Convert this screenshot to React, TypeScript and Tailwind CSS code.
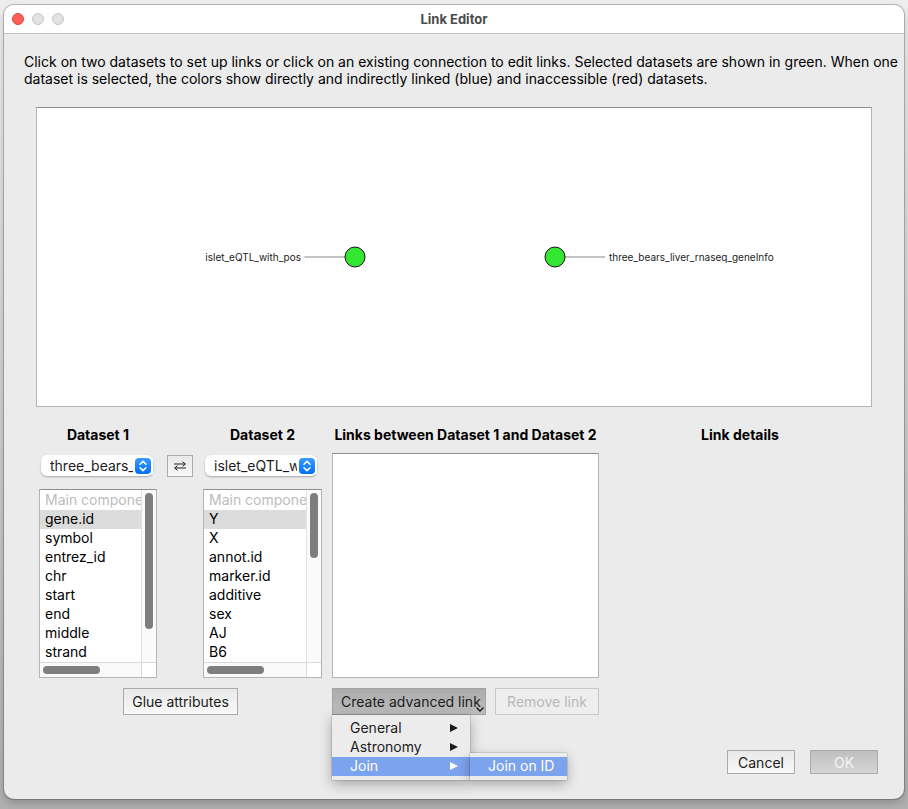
import { useState } from "react";

const datasetOneAttributes = ["gene.id", "symbol", "entrez_id", "chr", "start", "end", "middle", "strand"];
const datasetTwoAttributes = ["Y", "X", "annot.id", "marker.id", "additive", "sex", "AJ", "B6"];

const raisedButton =
  "border border-[#ababab] bg-linear-to-b from-[#e9e9e9] to-[#f8f8f8] text-[#1c1c1c]";

function DatasetSelect({ id, name }: { id: string; name: string }) {
  return (
    <div className="mx-[2px] grid h-[21px] w-[112px] grid-cols-[1fr_20px] items-center rounded-md bg-white shadow-[0_1px_2px_rgba(0,0,0,0.3)]">
      <select
        id={id}
        className="col-span-2 col-start-1 row-start-1 h-5 w-full appearance-none overflow-hidden rounded-md bg-transparent pr-5 pl-[9px] text-clip text-[#1c1c1c] outline-none"
      >
        <option>{name}</option>
      </select>
      <div className="pointer-events-none col-start-2 row-start-1 bg-white pl-[2px]">
        <svg viewBox="0 0 16 16" className="size-4" aria-hidden="true">
          <defs>
            <linearGradient id={`${id}-fill`} x1="0" y1="0" x2="0" y2="1">
              <stop offset="0" stopColor="#3b9bff" />
              <stop offset="1" stopColor="#0070f5" />
            </linearGradient>
          </defs>
          <rect width="16" height="16" rx="4" fill={`url(#${id}-fill)`} />
          <path d="M5 6.3 8 3.4l3 2.900M5 9.700l3 2.900 3-2.900" fill="none" stroke="#fff" strokeWidth="1.5" strokeLinecap="round" strokeLinejoin="round" />
        </svg>
      </div>
    </div>
  );
}

function AttributeList({
  label,
  items,
  thumb,
}: {
  label: string;
  items: string[];
  thumb: string;
}) {
  return (
    <div className="grid h-[189px] grid-cols-[1fr_15px] grid-rows-[1fr_15px] border border-[#b4b4b4] border-t-[#8e8e8e] bg-white">
      <select
        size={9}
        aria-label={label}
        defaultValue={items[0]}
        className="h-[172px] w-full min-w-0 appearance-none overflow-hidden bg-white pt-px text-black outline-none"
      >
        <option disabled className="h-[19px] overflow-hidden p-0 pl-[5px] text-clip text-[#bdbdbd]">
          Main components
        </option>
        {items.map((item) => (
          <option
            key={item}
            value={item}
            className="h-[19px] p-0 pl-[5px] text-black checked:bg-[#dcdcdc]"
          >
            {item}
          </option>
        ))}
      </select>
      <div className="border-l border-[#e2e2e2] bg-[#fafafa] px-[3px] py-[3px]">
        <div className={`w-2 rounded-full bg-[#7e7e7e] ${thumb}`} />
      </div>
      <div className="border-t border-[#dadada] bg-[#fafafa] p-[3px]">
        <div className="h-2 w-[57px] rounded-full bg-[#7e7e7e]" />
      </div>
      <div className="border-t border-l border-[#dadada] bg-white" />
    </div>
  );
}

function MenuArrow() {
  return (
    <svg viewBox="0 0 8 8" className="size-2" aria-hidden="true">
      <path d="M0 0l8 4-8 4z" fill="currentColor" />
    </svg>
  );
}

function LinkGraph() {
  return (
    <svg viewBox="0 0 834 298" className="h-[298px] w-full" role="img" aria-label="Dataset graph">
      <path d="M267.500 149H308M528 149h40" stroke="#b0b0b0" strokeWidth="1.5" />
      <circle cx="318" cy="149" r="10" fill="#32e632" stroke="#111" />
      <circle cx="518" cy="149" r="10" fill="#32e632" stroke="#111" />
      <text x="264" y="153" textAnchor="end" className="fill-[#1c1c1c] text-[10px]">
        islet_eQTL_with_pos
      </text>
      <text x="572" y="153" className="fill-[#1c1c1c] text-[10px]">
        three_bears_liver_rnaseq_geneInfo
      </text>
    </svg>
  );
}

export default function App() {
  const [menuOpen, setMenuOpen] = useState(true);

  return (
    <div className="flex min-h-screen flex-col bg-linear-to-b from-[#eeeeee] via-[#d0d0d0] to-[#b0b0b0] px-1 pt-[5px] pb-[10px] font-['Inter','Liberation_Sans',sans-serif] text-[14px] leading-[17px] text-black">
      <main className="flex flex-1 flex-col rounded-[10px] bg-[#ebebeb] shadow-[0_0_0_1px_rgba(0,0,0,0.2),0_4px_8px_rgba(0,0,0,0.2)]">
        <header className="grid h-[29px] grid-cols-[1fr_auto_1fr] items-center rounded-t-[10px] border-b border-[#c3c3c3] bg-white px-2">
          <div className="flex gap-2">
            <button aria-label="Close" className="size-3 rounded-full border border-[#e0443e] bg-[#ff5f57]" />
            <button aria-label="Minimize" className="size-3 rounded-full border border-[#c6c6c6] bg-[#e2e2e2]" />
            <button aria-label="Zoom" className="size-3 rounded-full border border-[#c6c6c6] bg-[#e2e2e2]" />
          </div>
          <h1 className="text-[13px] font-bold text-[#4a4a4a]">Link Editor</h1>
        </header>

        <p className="pt-[19px] pr-1 pl-5">
          Click on two datasets to set up links or click on an existing connection to edit links. Selected datasets are
          shown in green. When one dataset is selected, the colors show directly and indirectly linked (blue) and
          inaccessible (red) datasets.
        </p>

        <section className="mx-8 mt-5 border border-[#b4b4b4] border-t-[#8e8e8e] bg-white">
          <LinkGraph />
        </section>

        <div className="mt-[19px] grid grid-cols-[283fr_267fr_262fr] gap-[10px] pr-[33px] pl-[35px]">
          <section className="flex flex-col items-center gap-[10px]">
            <div className="grid w-full grid-cols-[118fr_26px_119fr] gap-x-[10px]">
              <div>
                <h2 className="mb-3 text-center font-bold">
                  <label htmlFor="dataset-one">Dataset 1</label>
                </h2>
                <DatasetSelect id="dataset-one" name="three_bears_liver_rnaseq_geneInfo" />
                <div className="mt-[13px]">
                  <AttributeList label="Dataset 1 attributes" items={datasetOneAttributes} thumb="h-[136px]" />
                </div>
              </div>
              <button
                aria-label="Swap datasets"
                className={`mt-[29px] flex h-[22px] items-center justify-center ${raisedButton}`}
              >
                <svg viewBox="0 0 14 10" className="h-[10px] w-[14px]" aria-hidden="true" fill="none" stroke="#222">
                  <path d="M1 3h11M9.500 .7 12.500 3 9.500 5.300M13 7H2M4.500 4.700 1.500 7l3 2.300" />
                </svg>
              </button>
              <div>
                <h2 className="mb-3 text-center font-bold">
                  <label htmlFor="dataset-two">Dataset 2</label>
                </h2>
                <DatasetSelect id="dataset-two" name="islet_eQTL_with_pos" />
                <div className="mt-[13px]">
                  <AttributeList label="Dataset 2 attributes" items={datasetTwoAttributes} thumb="h-[65px]" />
                </div>
              </div>
            </div>
            <button className={`h-[27px] px-2 ${raisedButton}`}>Glue attributes</button>
          </section>

          <section className="flex flex-col">
            <h2 className="mb-[10px] text-center font-bold whitespace-nowrap">Links between Dataset 1 and Dataset 2</h2>
            <div className="h-[225px] border border-[#b4b4b4] border-t-[#8e8e8e] bg-white" />
            <div className="relative mt-[10px] flex justify-between">
              <button
                aria-haspopup="menu"
                aria-expanded={menuOpen}
                onClick={() => setMenuOpen(!menuOpen)}
                className="flex h-[27px] w-[154px] items-center border border-[#a3a3a3] bg-linear-to-b from-[#acacac] to-[#bcbcbc] pl-2 whitespace-nowrap text-[#1c1c1c]"
              >
                Create advanced link
                <svg viewBox="0 0 8 5" className="-ml-[5px] mb-[2px] h-[5px] w-2 shrink-0 self-end" aria-hidden="true">
                  <path d="M.5 .5 4 4 7.500 .5" fill="none" stroke="#111" strokeWidth="1.3" />
                </svg>
              </button>
              <button disabled className="h-[27px] w-[104px] border border-[#c8c8c8] bg-[#eeeeee] text-[#b8b8b8]">
                Remove link
              </button>
              {menuOpen && (
                <div
                  role="menu"
                  className="absolute top-[27px] left-0 z-10 w-[138px] bg-[#ececec] py-1 text-[#1c1c1c] shadow-[0_0_1px_rgba(0,0,0,0.6),0_4px_12px_rgba(0,0,0,0.3)]"
                >
                  <button role="menuitem" className="flex h-[19px] w-full items-center justify-between pr-3 pb-[2px] pl-[18px]">
                    General
                    <MenuArrow />
                  </button>
                  <button role="menuitem" className="flex h-[19px] w-full items-center justify-between pr-3 pb-[2px] pl-[18px]">
                    Astronomy
                    <MenuArrow />
                  </button>
                  <div className="relative">
                    <button
                      role="menuitem"
                      aria-haspopup="menu"
                      aria-expanded="true"
                      className="flex h-[19px] w-full items-center justify-between bg-[#7ca3ee] pr-3 pb-[2px] pl-[18px] text-white"
                    >
                      Join
                      <MenuArrow />
                    </button>
                    <div
                      role="menu"
                      className="absolute -top-1 left-full w-[97px] bg-[#ececec] py-1 shadow-[0_0_1px_rgba(0,0,0,0.6),0_4px_12px_rgba(0,0,0,0.3)]"
                    >
                      <button
                        role="menuitem"
                        className="flex h-[19px] w-full items-center bg-[#7ca3ee] pb-[2px] pl-[18px] whitespace-nowrap text-white"
                      >
                        Join on ID
                      </button>
                    </div>
                  </div>
                </div>
              )}
            </div>
          </section>

          <section>
            <h2 className="text-center font-bold">Link details</h2>
          </section>
        </div>

        <footer className="mt-auto flex justify-end gap-[15px] px-[26px] pb-[25px]">
          <button className={`h-6 w-[68px] ${raisedButton}`}>Cancel</button>
          <button
            disabled
            className="h-6 w-[68px] border border-[#ababab] bg-linear-to-b from-[#bfbfbf] to-[#d6d6d6] text-[#f5f5f5]"
          >
            OK
          </button>
        </footer>
      </main>
    </div>
  );
}
